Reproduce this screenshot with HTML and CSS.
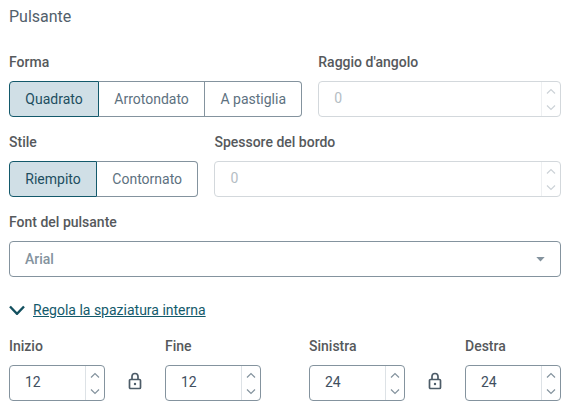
FILE: index.html
```html
<!DOCTYPE html>
<html lang="it">
<head>
<meta charset="utf-8">
<title>Pulsante</title>
<link rel="stylesheet" href="styles.css">
</head>
<body>
<main class="panel">
  <h2 class="title">Pulsante</h2>

  <div class="row row-shape">
    <div class="field">
      <div class="label">Forma</div>
      <div class="segments">
        <button class="seg seg-on">Quadrato</button>
        <button class="seg">Arrotondato</button>
        <button class="seg">A pastiglia</button>
      </div>
    </div>
    <div class="field grow">
      <div class="label">Raggio d'angolo</div>
      <div class="num num-off">
        <span class="num-value">0</span>
        <span class="spin">
          <svg class="chev" width="12" height="7" viewBox="0 0 12 7"><path d="M2 5.500 6 1.500l4 4"/></svg>
          <svg class="chev" width="12" height="7" viewBox="0 0 12 7"><path d="M2 1.500 6 5.500l4-4"/></svg>
        </span>
      </div>
    </div>
  </div>

  <div class="row row-style">
    <div class="field">
      <div class="label">Stile</div>
      <div class="segments">
        <button class="seg seg-on">Riempito</button>
        <button class="seg">Contornato</button>
      </div>
    </div>
    <div class="field grow">
      <div class="label">Spessore del bordo</div>
      <div class="num num-off">
        <span class="num-value">0</span>
        <span class="spin">
          <svg class="chev" width="12" height="7" viewBox="0 0 12 7"><path d="M2 5.500 6 1.500l4 4"/></svg>
          <svg class="chev" width="12" height="7" viewBox="0 0 12 7"><path d="M2 1.500 6 5.500l4-4"/></svg>
        </span>
      </div>
    </div>
  </div>

  <div class="field font-field">
    <div class="label">Font del pulsante</div>
    <div class="select">
      <span class="select-value">Arial</span>
      <svg class="caret" width="9" height="5" viewBox="0 0 10 6"><path d="M0 0h10L5 5.500z"/></svg>
    </div>
  </div>

  <div class="toggle">
    <svg class="toggle-icon" width="16" height="10" viewBox="0 0 16 10"><path d="M1 1.500 8 8.800 15 1.500"/></svg>
    <a class="link" href="#">Regola la spaziatura interna</a>
  </div>

  <div class="padding-row">
    <div class="field pad">
      <div class="label">Inizio</div>
      <div class="num">
        <span class="num-value">12</span>
        <span class="spin">
          <svg class="chev" width="12" height="7" viewBox="0 0 12 7"><path d="M2 5.500 6 1.500l4 4"/></svg>
          <svg class="chev" width="12" height="7" viewBox="0 0 12 7"><path d="M2 1.500 6 5.500l4-4"/></svg>
        </span>
      </div>
    </div>
    <svg class="lock" width="14" height="18" viewBox="0 0 14 18"><path class="lock-line" d="M4 7.500V4.500a3 3 0 0 1 6 0V7.500M2.500 7.500h9a1 1 0 0 1 1 1v7a1 1 0 0 1-1 1h-9a1 1 0 0 1-1-1v-7a1 1 0 0 1 1-1z"/><circle class="lock-dot" cx="7" cy="12" r="1.200"/></svg>
    <div class="field pad">
      <div class="label">Fine</div>
      <div class="num">
        <span class="num-value">12</span>
        <span class="spin">
          <svg class="chev" width="12" height="7" viewBox="0 0 12 7"><path d="M2 5.500 6 1.500l4 4"/></svg>
          <svg class="chev" width="12" height="7" viewBox="0 0 12 7"><path d="M2 1.500 6 5.500l4-4"/></svg>
        </span>
      </div>
    </div>
    <div class="field pad pad-second">
      <div class="label">Sinistra</div>
      <div class="num">
        <span class="num-value">24</span>
        <span class="spin">
          <svg class="chev" width="12" height="7" viewBox="0 0 12 7"><path d="M2 5.500 6 1.500l4 4"/></svg>
          <svg class="chev" width="12" height="7" viewBox="0 0 12 7"><path d="M2 1.500 6 5.500l4-4"/></svg>
        </span>
      </div>
    </div>
    <svg class="lock" width="14" height="18" viewBox="0 0 14 18"><path class="lock-line" d="M4 7.500V4.500a3 3 0 0 1 6 0V7.500M2.500 7.500h9a1 1 0 0 1 1 1v7a1 1 0 0 1-1 1h-9a1 1 0 0 1-1-1v-7a1 1 0 0 1 1-1z"/><circle class="lock-dot" cx="7" cy="12" r="1.200"/></svg>
    <div class="field pad">
      <div class="label">Destra</div>
      <div class="num">
        <span class="num-value">24</span>
        <span class="spin">
          <svg class="chev" width="12" height="7" viewBox="0 0 12 7"><path d="M2 5.500 6 1.500l4 4"/></svg>
          <svg class="chev" width="12" height="7" viewBox="0 0 12 7"><path d="M2 1.500 6 5.500l4-4"/></svg>
        </span>
      </div>
    </div>
  </div>
</main>
</body>
</html>
```
FILE: styles.css
```css
* { box-sizing: border-box; }
html, body { margin: 0; padding: 0; background: #fff; }
body {
  width: 572px;
  height: 416px;
  overflow: hidden;
  font-family: Roboto, "Liberation Sans", sans-serif;
  font-size: 14px;
  color: #414f5a;
}
.panel { padding: 8px 11px 0 9px; }
.title {
  margin: 0;
  font-size: 16px;
  font-weight: 400;
  line-height: 18px;
  color: #52606b;
}
.row { display: flex; gap: 16px; }
.row-shape { margin-top: 26px; }
.row-style { margin-top: 15px; }
.field { display: flex; flex-direction: column; }
.grow { flex: 1; }
.label {
  font-size: 14px;
  font-weight: 500;
  line-height: 20px;
  color: #56595c;
  margin-bottom: 9px;
}
.segments { display: flex; }
.seg {
  height: 36px;
  margin: 0;
  padding: 0 15.3px;
  font: 400 14px/20px Roboto, "Liberation Sans", sans-serif;
  color: #5d7180;
  background: #fff;
  border: 1px solid #84939e;
  border-left-width: 0;
}
.seg:first-child { border-left-width: 1px; border-radius: 4px 0 0 4px; }
.seg:last-child { border-radius: 0 4px 4px 0; }
.seg-on {
  color: #1d4e5f;
  background: #d0dfe6;
  border-color: #13596b;
  border-right-width: 1px;
}
.num {
  display: flex;
  height: 36px;
  border: 1px solid #84939e;
  border-radius: 4px;
  background: #fff;
}
.num-value {
  flex: 1;
  padding-left: 15px;
  font-size: 14px;
  line-height: 33px;
  color: #414f5f;
}
.spin {
  width: 19px;
  display: flex;
  flex-direction: column;
  align-items: center;
  justify-content: space-between;
  padding: 6px 0 5px;
  border-left: 1px solid #dde2e6;
}
.chev { display: block; fill: none; stroke: #84939e; stroke-width: 1.200; }
.num-off { border-color: #d3d8dc; }
.num-off .num-value { color: #b4bdc4; }
.num-off .spin { border-left-color: #eef0f2; }
.num-off .chev { stroke: #ccd2d7; }
.font-field { margin-top: 15px; }
.select {
  display: flex;
  align-items: center;
  justify-content: space-between;
  height: 36px;
  padding: 0 15px;
  border: 1px solid #84939e;
  border-radius: 4px;
  font-size: 14px;
  color: #84939e;
}
.select-value { line-height: 33px; font-weight: 500; }
.caret { fill: #84939e; }
.toggle {
  display: flex;
  align-items: center;
  gap: 8px;
  margin-top: 23px;
  height: 20px;
}
.toggle-icon { fill: none; stroke: #13505f; stroke-width: 2.400; }
.link { font-size: 14px; line-height: 20px; color: #135a6b; text-decoration: underline; }
.padding-row {
  display: flex;
  align-items: flex-end;
  margin-top: 16px;
}
.pad { width: 96px; }
.pad-second { margin-left: 48px; }
.lock { margin: 0 23px 11px; flex: none; }
.lock-line { fill: none; stroke: #4d5c68; stroke-width: 1.700; }
.lock-dot { fill: #4d5c68; }
```
